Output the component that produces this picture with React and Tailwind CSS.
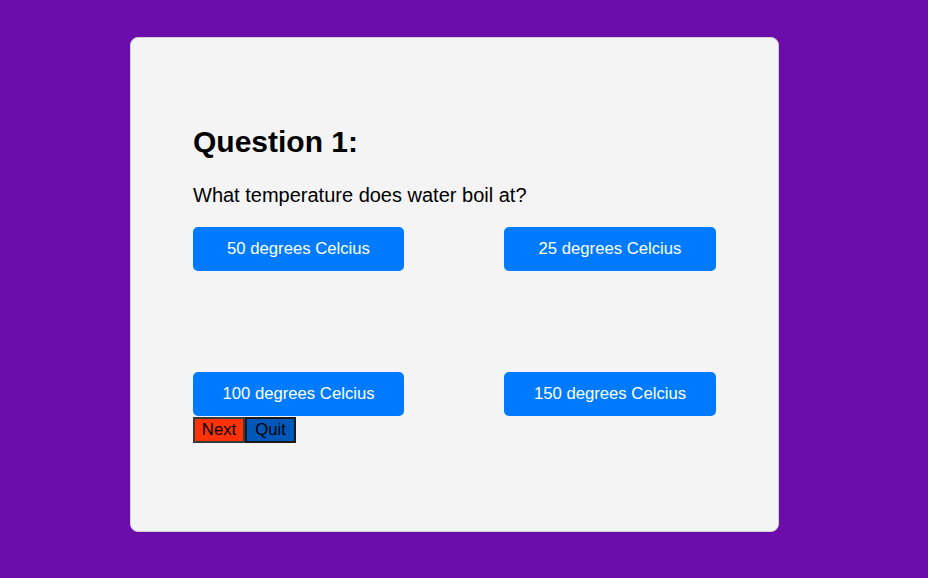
export default function App() {
  const answers = ['50 degrees Celcius', '25 degrees Celcius', '100 degrees Celcius', '150 degrees Celcius'];

  return (
    <div className="min-h-[578px] w-full bg-[#6a0dab] pt-[37px] font-['Liberation_Sans',Arial,sans-serif]">
      <div className="ml-[130px] h-[495px] w-[649px] rounded-[8px] border border-[#cfcfcf] bg-[#f4f4f4] pl-[62px] pt-[87px]">
        {/* Question */}
        <h2 className="text-[30px] font-bold leading-[34px] text-black">Question 1:</h2>
        <p className="mt-[25px] text-[20px] leading-[23px] text-black">What temperature does water boil at?</p>

        {/* Answers */}
        <div className="mt-[20px] grid grid-cols-[211px_212px] gap-x-[100px] gap-y-[101px]">
          {answers.map((a, i) => (
            <button
              key={i}
              className="h-[44px] rounded-[5px] bg-[#007bff] text-[16.7px] text-white"
            >
              {a}
            </button>
          ))}
        </div>

        <div className="mt-[1px] flex">
          <button className="h-[26px] w-[52px] border-2 border-[#3a3a3a] bg-[#ff3208] text-[16.7px] leading-[18px] text-black">
            Next
          </button>
          <button className="h-[26px] w-[51px] border-2 border-[#1a1a1a] bg-[#0059b9] text-[16.7px] leading-[18px] text-black">
            Quit
          </button>
        </div>
      </div>
    </div>
  );
}
